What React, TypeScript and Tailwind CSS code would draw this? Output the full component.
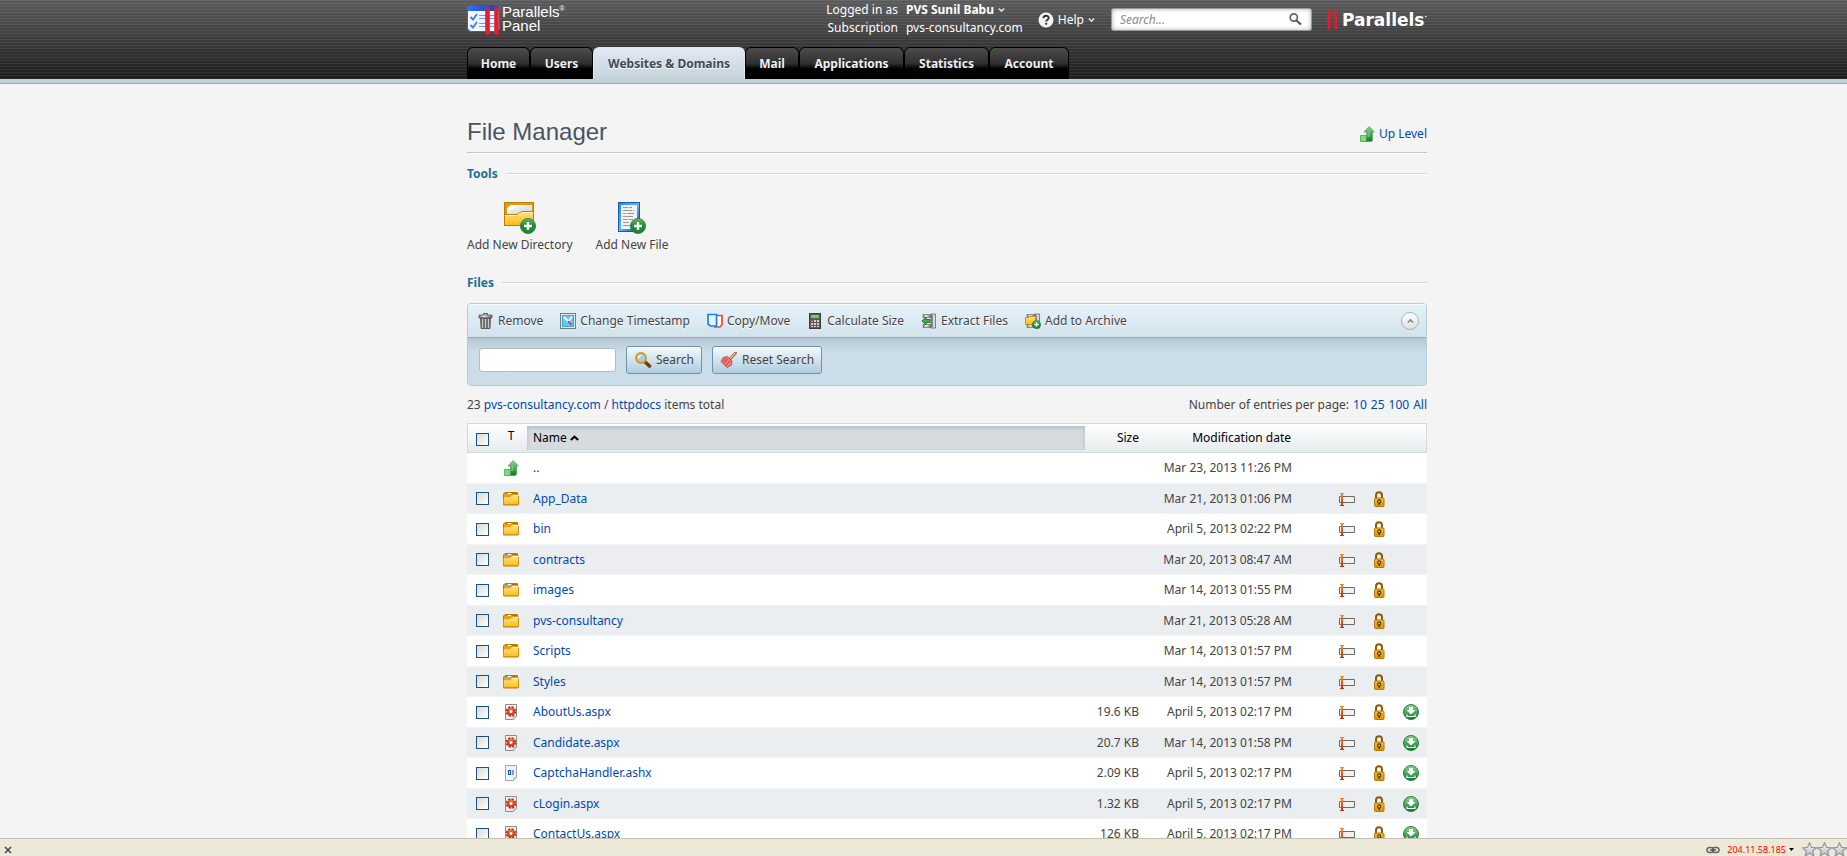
import React, { useState } from "react";

type FileKind = "up" | "folder" | "aspx" | "bin";

interface Entry {
  name: string;
  kind: FileKind;
  size?: string;
  date: string;
}

const entries: Entry[] = [
  { name: "..", kind: "up", date: "Mar 23, 2013 11:26 PM" },
  { name: "App_Data", kind: "folder", date: "Mar 21, 2013 01:06 PM" },
  { name: "bin", kind: "folder", date: "April 5, 2013 02:22 PM" },
  { name: "contracts", kind: "folder", date: "Mar 20, 2013 08:47 AM" },
  { name: "images", kind: "folder", date: "Mar 14, 2013 01:55 PM" },
  { name: "pvs-consultancy", kind: "folder", date: "Mar 21, 2013 05:28 AM" },
  { name: "Scripts", kind: "folder", date: "Mar 14, 2013 01:57 PM" },
  { name: "Styles", kind: "folder", date: "Mar 14, 2013 01:57 PM" },
  { name: "AboutUs.aspx", kind: "aspx", size: "19.6 KB", date: "April 5, 2013 02:17 PM" },
  { name: "Candidate.aspx", kind: "aspx", size: "20.7 KB", date: "Mar 14, 2013 01:58 PM" },
  { name: "CaptchaHandler.ashx", kind: "bin", size: "2.09 KB", date: "April 5, 2013 02:17 PM" },
  { name: "cLogin.aspx", kind: "aspx", size: "1.32 KB", date: "April 5, 2013 02:17 PM" },
  { name: "ContactUs.aspx", kind: "aspx", size: "126 KB", date: "April 5, 2013 02:17 PM" },
];

const tabs = [
  { label: "Home", width: "w-[63px]" },
  { label: "Users", width: "w-[63px]" },
  { label: "Websites & Domains", width: "w-[152px]", active: true },
  { label: "Mail", width: "w-[54px]" },
  { label: "Applications", width: "w-[105px]" },
  { label: "Statistics", width: "w-[85px]" },
  { label: "Account", width: "w-20" },
];

const linkClass = "text-[#0049b0] hover:underline";

/* ---------- icons ---------- */

function Gradients() {
  return (
    <svg width="0" height="0" className="absolute" aria-hidden="true">
      <defs>
        <linearGradient id="gFolder" x1="0" y1="0" x2="0" y2="1">
          <stop offset="0" stopColor="#ffe27a" />
          <stop offset="1" stopColor="#fdbb16" />
        </linearGradient>
        <linearGradient id="gGreen" x1="0" y1="0" x2="0" y2="1">
          <stop offset="0" stopColor="#8cd98a" />
          <stop offset="1" stopColor="#087a2c" />
        </linearGradient>
        <linearGradient id="gPlus" x1="0" y1="0" x2="0" y2="1">
          <stop offset="0" stopColor="#62b765" />
          <stop offset=".5" stopColor="#1e8a36" />
          <stop offset="1" stopColor="#1c8436" />
        </linearGradient>
        <linearGradient id="gBlue" x1="0" y1="0" x2="1" y2="1">
          <stop offset="0" stopColor="#2388e8" />
          <stop offset=".5" stopColor="#5ab4ff" />
          <stop offset="1" stopColor="#0a4fb4" />
        </linearGradient>
        <linearGradient id="gPaper" x1="0" y1="0" x2="1" y2="1">
          <stop offset="0" stopColor="#ffffff" />
          <stop offset="1" stopColor="#cfcfcf" />
        </linearGradient>
        <linearGradient id="gMetal" x1="0" y1="0" x2="1" y2="0">
          <stop offset="0" stopColor="#777" />
          <stop offset=".4" stopColor="#eeeeee" />
          <stop offset="1" stopColor="#666" />
        </linearGradient>
        <linearGradient id="gCursor" x1="0" y1="0" x2="0" y2="1">
          <stop offset="0" stopColor="#f09030" />
          <stop offset="1" stopColor="#cc2a08" />
        </linearGradient>
        <linearGradient id="gLock" x1="0" y1="0" x2="0" y2="1">
          <stop offset="0" stopColor="#f9bf2c" />
          <stop offset="1" stopColor="#dc8d06" />
        </linearGradient>
        <linearGradient id="gStar" x1="0" y1="0" x2="0" y2="1">
          <stop offset="0" stopColor="#ffffff" />
          <stop offset="1" stopColor="#b4b6bb" />
        </linearGradient>
        <linearGradient id="gPanel" x1="0" y1="0" x2="1" y2="0">
          <stop offset="0" stopColor="#2f6fee" />
          <stop offset="1" stopColor="#1b3fb0" />
        </linearGradient>
      </defs>
    </svg>
  );
}

function UpIcon() {
  return (
    <svg width="16" height="16" viewBox="0 0 16 16" aria-hidden="true">
      <path d="M1.500 9.500h6v6h-6z" fill="#7ddb78" stroke="#55bb5a" />
      <path
        d="M6.500 15.500h6l1-1V6h1.800L10.200.5 5 6h2.500v8z"
        fill="url(#gGreen)"
        stroke="#5f9f66"
        strokeWidth=".8"
      />
      <path d="M8.500 5h2v6h-2z" fill="#7ad276" opacity=".7" />
    </svg>
  );
}

function FolderIcon() {
  return (
    <svg width="16" height="16" viewBox="0 0 16 16" aria-hidden="true">
      <path d="M.5 14V3l1.500-1.500h12.500L15 6v8z" fill="#e9a01c" stroke="#c17a08" />
      <path d="M2.500 2.500h2" stroke="#2f7be0" />
      <path d="M4.500 2.500h4" stroke="#fff" />
      <path d="M8.500 2.500h5.500" stroke="#b06a06" />
      <path d="M1 14V7.500h6.500L9.500 5H16v9z" fill="url(#gFolder)" />
      <path d="M1 7h6.300l2-2.500H15.500" fill="none" stroke="#fff0b0" />
      <path d="M.5 7v6.500h15V5" fill="none" stroke="#d29410" />
    </svg>
  );
}

function AspxIcon() {
  return (
    <svg width="16" height="16" viewBox="0 0 16 16" aria-hidden="true">
      <path d="M2.500.5h11v12l-3 3h-8z" fill="#f4efee" stroke="#8b8b8b" />
      <path d="M13.500 12.500h-3v3z" fill="#d8d8d8" stroke="#aaa" strokeWidth=".6" />
      <circle cx="8" cy="7.500" r="4.300" fill="none" stroke="#b92a20" strokeWidth="2" strokeDasharray="2.100 1.280" />
      <circle cx="8" cy="7.500" r="2.800" fill="#fbe3cc" stroke="#dd3a16" strokeWidth="2.200" />
      <path d="M5.500 6a3 3 0 0 1 5 0" stroke="#f5a040" fill="none" />
      <path d="M7 6.500h2v2H7z" fill="#fff" />
    </svg>
  );
}

function BinIcon() {
  return (
    <svg width="16" height="16" viewBox="0 0 16 16" aria-hidden="true">
      <path d="M2.500.5h11v12l-3 3h-8z" fill="#f3f4f7" stroke="#a2a4a8" />
      <path d="M13.500 12.500h-3v3z" fill="#ddd" stroke="#aaa" strokeWidth=".6" />
      <path d="M5.500 5.500h2v4h-2zM10 5v5" fill="none" stroke="#1557cf" strokeWidth="1.100" />
    </svg>
  );
}

function RenameIcon() {
  return (
    <svg width="16" height="16" viewBox="0 0 16 16" aria-hidden="true">
      <path d="M.5 5.500h15v6H.5z" fill="#f1f1f1" stroke="#6a6a6a" />
      <path d="M1 2h4v1H4v11h1v1H1v-1h1V3H1z" fill="url(#gCursor)" />
    </svg>
  );
}

function LockIcon() {
  return (
    <svg width="16" height="16" viewBox="0 0 16 16" aria-hidden="true">
      <path d="M5 8V4.200a3 3 0 0 1 6 0V8" fill="none" stroke="#8f5a06" strokeWidth="2" />
      <rect x="3.500" y="7" width="9.500" height="8.500" rx="1" fill="url(#gLock)" stroke="#b97704" />
      <circle cx="8.200" cy="10.500" r="1.600" fill="#f5c84a" stroke="#42330d" strokeWidth="1.100" />
      <path d="M8.200 12v2" stroke="#42330d" strokeWidth="1.300" />
    </svg>
  );
}

function DownloadIcon() {
  return (
    <svg width="16" height="16" viewBox="0 0 16 16" aria-hidden="true">
      <circle cx="8" cy="8" r="7.500" fill="url(#gGreen)" stroke="#2f7a44" />
      <path d="M6 3h4v3h2.500L8 10.500 3.500 6H6z" fill="#fff" />
      <path d="M4 10.500v2h8v-2" fill="none" stroke="#fff" strokeWidth="1.200" />
    </svg>
  );
}

const kindIcons: Record<FileKind, () => React.JSX.Element> = {
  up: UpIcon,
  folder: FolderIcon,
  aspx: AspxIcon,
  bin: BinIcon,
};

function AddDirectoryIcon() {
  return (
    <svg width="32" height="32" viewBox="0 0 32 32" aria-hidden="true">
      <rect x=".5" y=".5" width="29" height="23" fill="#e69a0c" stroke="#bf7c05" />
      <path d="M3 12V6l4-3h21v9z" fill="url(#gPaper)" />
      <path d="M3 9c6-1 8-4 12-6H7L3 6z" fill="#fff" />
      <path d="M1 23V13h12l5-3h11v13z" fill="url(#gFolder)" />
      <path d="M1 12.500h12l5-3h11" fill="none" stroke="#b98016" />
      <path d="M1 13.500h12l5-3h11" fill="none" stroke="#fff3b8" />
      <PlusBadge cx={24} cy={24} r={8} />
    </svg>
  );
}

function PlusBadge({ cx, cy, r }: { cx: number; cy: number; r: number }) {
  return (
    <g transform={`translate(${cx} ${cy}) scale(${r / 8})`}>
      <circle r="7.600" fill="url(#gPlus)" stroke="#2b7a3c" strokeWidth=".8" />
      <path d="M-4 0h8M0-4v8" stroke="#fff" strokeWidth="2.400" />
    </g>
  );
}

function AddFileIcon() {
  return (
    <svg width="28" height="32" viewBox="0 0 28 32" aria-hidden="true">
      <rect x=".5" y=".5" width="21" height="29" fill="url(#gBlue)" stroke="#1a5cab" />
      <rect x="3" y="3" width="16" height="24" fill="#f1f1f1" />
      <path
        d="M5 5.500h5m1 0h3M5 8.500h9m1 0h1M5 11.500h3m1 0h7M5 14.500h10M5 17.500h5m1 0h4M5 20.500h6M5 23.500h7"
        stroke="#999"
      />
      <PlusBadge cx={20} cy={24} r={8} />
    </svg>
  );
}

function TrashIcon() {
  return (
    <svg width="16" height="16" viewBox="0 0 16 16" aria-hidden="true">
      <path d="M5.500 2V.5h4V2" fill="none" stroke="#555" />
      <path d="M1 2h13v3H1z" fill="url(#gMetal)" stroke="#4d4d4d" strokeWidth=".7" />
      <path d="M2.500 5h10l-.5 10.500H3z" fill="#6b6b6b" stroke="#444" strokeWidth=".7" />
      <path d="M4.500 6v9M7.500 6v9M10.500 6v9" stroke="#c9c9c9" strokeWidth="1.200" />
    </svg>
  );
}

function TimestampIcon() {
  return (
    <svg width="16" height="16" viewBox="0 0 16 16" aria-hidden="true">
      <rect x=".5" y=".5" width="15" height="15" fill="#e6eaec" stroke="#767c80" />
      <rect x="2.500" y="2.500" width="11" height="11" fill="#62c8fa" stroke="#3ba5e2" />
      <path d="M4 4l4.500 4.500" stroke="#fff" strokeWidth="2" />
      <path d="M12 3.500L8 9" stroke="#fff" strokeWidth="1.500" />
      <path d="M8 8l3.500 4" stroke="#d3283c" strokeWidth="1.400" />
    </svg>
  );
}

function CopyIcon() {
  return (
    <svg width="16" height="16" viewBox="0 0 16 16" aria-hidden="true">
      <path d="M8 2.500h7v9L13 14H8z" fill="#fff" stroke="#ee4a20" strokeWidth="1.700" />
      <path d="M1 1.500h8.500v11.500H3.500L1 11z" fill="#eaf4ff" stroke="#1683f0" strokeWidth="1.700" />
    </svg>
  );
}

function CalculatorIcon() {
  return (
    <svg width="16" height="16" viewBox="0 0 16 16" aria-hidden="true">
      <rect x="2.500" y=".5" width="11" height="15" fill="#5d5d5d" stroke="#3e3e3e" />
      <path d="M4 2h8v3H4z" fill="#5bd467" />
      <path d="M4 7h2v2H4z" fill="#ee5050" />
      <path d="M7 7h2v2H7zm3 0h2v2h-2zM4 10h2v2H4zm3 0h2v2H7zm3 0h2v2h-2zM4 13h2v1H4zm3 0h2v1H7zm3 0h2v1h-2z" fill="#d0d0d0" />
    </svg>
  );
}

function Vise() {
  return (
    <>
      <path d="M2 1.500h8v3H2zM2 11.500h8v3H2z" fill="url(#gMetal)" stroke="#777" strokeWidth=".8" />
      <path d="M10 1h4.500v14H10z" fill="#d9d9d9" stroke="#666" strokeWidth=".8" />
      <path d="M11 2v12" stroke="#555" strokeWidth="1.200" />
    </>
  );
}

function ExtractIcon() {
  return (
    <svg width="16" height="16" viewBox="0 0 16 16" aria-hidden="true">
      <Vise />
      <path d="M1 8l4-4v2.500h4v3H5V12z" fill="#3fae43" stroke="#14722a" strokeWidth=".9" />
    </svg>
  );
}

function ArchiveIcon() {
  return (
    <svg width="16" height="16" viewBox="0 0 16 16" aria-hidden="true">
      <Vise />
      <path d="M.5 4.500H4l1-1h5.500v8H.5z" fill="url(#gFolder)" stroke="#d29010" />
      <PlusBadge cx={11.500} cy={11.500} r={4.500} />
    </svg>
  );
}

function MagnifierIcon() {
  return (
    <svg width="18" height="16" viewBox="0 0 18 16" aria-hidden="true">
      <path d="M10.500 9.500l5 4.500" stroke="#74410d" strokeWidth="3.600" strokeLinecap="round" />
      <circle cx="7" cy="6" r="5" fill="#a9cbe0" stroke="#d79a12" strokeWidth="1.900" />
      <path d="M4.500 6.500c0-2 1-3 3-3" stroke="#f2f9fc" strokeWidth="1.400" fill="none" />
    </svg>
  );
}

function BroomIcon() {
  return (
    <svg width="18" height="16" viewBox="0 0 18 16" aria-hidden="true">
      <path d="M15.500 1L10 7" stroke="#a87040" strokeWidth="3" strokeLinecap="round" />
      <path d="M15 1.200L10.500 6" stroke="#eab988" strokeWidth="1.200" strokeLinecap="round" />
      <path d="M7.500 4.500l4.500 4.500-.5 4-4.500 2.500L1 9.500l2-4z" fill="#ee7c7c" stroke="#c84450" strokeWidth=".9" />
      <path d="M8 7l-4.500 4.500M10 9l-4.500 5M6.500 6l-4 3.500" stroke="#b92e40" strokeWidth=".8" />
    </svg>
  );
}

function ChevronIcon({ className }: { className: string }) {
  return (
    <svg width="7" height="6" viewBox="0 0 7 6" className={className} aria-hidden="true">
      <path d="M.8 1.500l2.700 2.500 2.700-2.500" fill="none" stroke="currentColor" strokeWidth="1.700" />
    </svg>
  );
}

function PanelLogo() {
  return (
    <svg width="33" height="31" viewBox="0 0 33 31" aria-hidden="true">
      <rect x=".5" y=".5" width="32" height="26" rx="4" fill="#f2f6fc" stroke="#2a5fd8" />
      <path d="M1 6V4a3.500 3.500 0 0 1 3.500-3.500h24A3.500 3.500 0 0 1 32 4v2z" fill="url(#gPanel)" />
      <path d="M3.500 12l2.500 2.500L10 9M3.500 20l2.500 2.500L10 17" fill="none" stroke="#3f82ea" strokeWidth="1.900" />
      <path d="M12 10.500h15M12 13.500h15M12 18.500h15M12 21.500h15" stroke="#6a9dec" />
      <path d="M20.500 4v24M29.500 4v24" stroke="#de2032" strokeWidth="4.600" strokeLinecap="round" />
    </svg>
  );
}

/* ---------- shared controls ---------- */

function TickBox({ label }: { label: string }) {
  return (
    <input
      type="checkbox"
      aria-label={label}
      className="block size-[13px] appearance-none border border-[#1d5180] bg-linear-to-br from-[#d9d9d4] to-white checked:bg-[#7fa5c4] checked:bg-none"
    />
  );
}

function SectionTitle({ children }: { children: React.ReactNode }) {
  return (
    <div className="flex h-4 items-center gap-2">
      <h2 className="text-xs leading-4 font-bold text-[#226e92]">{children}</h2>
      <div className="h-0.5 flex-1 border-t border-[#d3d7da] bg-white" />
    </div>
  );
}

const toolbarItems = [
  { label: "Remove", Icon: TrashIcon },
  { label: "Change Timestamp", Icon: TimestampIcon },
  { label: "Copy/Move", Icon: CopyIcon },
  { label: "Calculate Size", Icon: CalculatorIcon },
  { label: "Extract Files", Icon: ExtractIcon },
  { label: "Add to Archive", Icon: ArchiveIcon },
];

const actionButton =
  "flex h-7 items-center gap-1 rounded-[3px] border border-[#6d93aa] bg-linear-to-b from-[#f4f9fc] to-[#afcddf] px-[7px] text-xs text-[#444] shadow-[inset_0_1px_0_#fff]";

/* ---------- page regions ---------- */

function Header() {
  return (
    <header className="shrink-0 border-b border-[#9aabb8] bg-[#c3d1d7] pb-1">
      <div className="bg-[repeating-linear-gradient(to_bottom,rgba(255,255,255,0.07)_0_1px,transparent_1px_3px),linear-gradient(to_bottom,#5c5c5c,#1c1c1c)]">
        <div className="mx-auto max-w-[1007px] pl-[47px]">
          <div className="flex h-[47px] items-start">
            <a href="#home" className="flex items-start gap-0.5 pt-[5px] text-white">
              <PanelLogo />
              <span className="font-['Liberation_Sans',sans-serif] text-[15px] leading-[14px]">
                Parallels<span className="align-top text-[7px] leading-[7px]">®</span>
                <br />
                Panel
              </span>
            </a>
            <dl className="ml-auto grid grid-cols-[auto_auto] gap-x-2 pt-px text-xs leading-[18px] text-white">
              <dt className="text-right">Logged in as</dt>
              <dd>
                <button type="button" className="flex items-center gap-1 font-bold">
                  PVS Sunil Babu <ChevronIcon className="text-[#ddd]" />
                </button>
              </dd>
              <dt className="text-right">Subscription</dt>
              <dd>pvs-consultancy.com</dd>
            </dl>
            <button type="button" className="ml-[15px] flex h-10 items-center gap-1 text-xs text-white">
              <svg width="16" height="16" viewBox="0 0 16 16" aria-hidden="true">
                <circle cx="8" cy="8" r="7.500" fill="#f5f5f5" />
                <path
                  d="M5.400 6.200c0-3.400 5.300-3.200 5.300-.3 0 1.800-2.500 1.800-2.500 3.600M8.200 10.700v2"
                  fill="none"
                  stroke="#333"
                  strokeWidth="1.900"
                />
              </svg>
              <span>Help</span>
              <ChevronIcon className="text-[#ddd]" />
            </button>
            <form
              role="search"
              className="mt-2 ml-4 flex h-[23px] w-[201px] items-center rounded-[3px] border border-[#999] bg-white pr-[9px] pl-2 shadow-[inset_0_0_4px_#aaa]"
              onSubmit={(e) => e.preventDefault()}
            >
              <input
                type="text"
                aria-label="Search"
                placeholder="Search..."
                className="min-w-0 flex-1 bg-transparent text-xs text-[#333] italic outline-none placeholder:text-[#8a8a8a]"
              />
              <button type="submit" aria-label="Search">
                <svg width="13" height="13" viewBox="0 0 13 13" aria-hidden="true">
                  <circle cx="4.800" cy="4.500" r="3.600" fill="none" stroke="#666" strokeWidth="1.700" />
                  <path d="M7.500 7.500l4.500 4" stroke="#555" strokeWidth="2.200" />
                </svg>
              </button>
            </form>
            <a href="#parallels" className="flex items-center gap-1 pt-[9px] pl-[15px] text-white">
              <svg width="11" height="21" viewBox="0 0 11 21" aria-hidden="true">
                <path d="M2 2v17M9 2v17" stroke="#d81e30" strokeWidth="3.200" strokeLinecap="round" />
              </svg>
              <span className="flex items-start font-['DejaVu_Sans',sans-serif] text-[17px] leading-5 font-bold">
                Parallels
                <span className="text-[4px] leading-[14px]">•</span>
              </span>
            </a>
          </div>
          <nav className="flex h-8" aria-label="Main">
            {tabs.map((tab) => (
              <a
                key={tab.label}
                href="#tab"
                aria-current={tab.active ? "page" : undefined}
                className={`flex items-center justify-center rounded-t-[6px] border-x border-t text-xs font-bold ${tab.width} ${
                  tab.active
                    ? "border-[#dfe7ef] bg-linear-to-b from-[#e2e9f3] to-[#c5d4da] text-[#3f4a58] [text-shadow:0_1px_0_#fff]"
                    : "border-black bg-linear-to-b from-[#4c4c4c] via-[#303030] via-50% to-black to-75% text-[#f0f0f0] [text-shadow:0_1px_0_#000]"
                }`}
              >
                {tab.label}
              </a>
            ))}
          </nav>
        </div>
      </div>
    </header>
  );
}

function Toolbar() {
  const [open, setOpen] = useState(true);
  return (
    <div className="overflow-hidden rounded-[4px] border border-[#b3cddd] bg-[#cbdde8]">
      <div className="flex h-[34px] items-center gap-[17px] border-b border-[#92afc0] bg-linear-to-b from-[#e5f2fa] to-[#d2e3ec] pr-[7px] pl-[10px] shadow-[inset_0_1px_0_#f4fafd]">
        {toolbarItems.map(({ label, Icon }) => (
          <button
            key={label}
            type="button"
            className="flex items-center gap-1 text-xs whitespace-nowrap text-[#444] [text-shadow:0_1px_0_#fff]"
          >
            <Icon />
            {label}
          </button>
        ))}
        <button
          type="button"
          aria-label="Toggle search"
          aria-expanded={open}
          onClick={() => setOpen(!open)}
          className="ml-auto flex size-[18px] items-center justify-center rounded-full border border-[#a9b3b9] bg-linear-to-b from-white to-[#dde2e5]"
        >
          <ChevronIcon className="rotate-180 text-[#888]" />
        </button>
      </div>
      {open && (
        <form
          className="flex h-[47px] items-start gap-[10px] bg-linear-to-b from-[#b4c8d4] to-[#cbdde8] to-30% pt-2 pl-[11px]"
          onSubmit={(e) => e.preventDefault()}
        >
          <input
            type="text"
            aria-label="Search files"
            className="mt-0.5 h-6 w-[137px] rounded-[3px] border border-[#b4bcc2] bg-white px-1 text-xs outline-none"
          />
          <button type="submit" className={actionButton}>
            <MagnifierIcon />
            Search
          </button>
          <button type="reset" className={actionButton}>
            <BroomIcon />
            Reset Search
          </button>
        </form>
      )}
    </div>
  );
}

function FileTable() {
  return (
    <table className="w-full table-fixed border-separate border-spacing-0 text-xs">
      <colgroup>
        <col className="w-[30px]" />
        <col className="w-7" />
        <col />
        <col className="w-[59px]" />
        <col className="w-[186px]" />
        <col className="w-8" />
        <col className="w-8" />
        <col className="w-8" />
      </colgroup>
      <thead>
        <tr className="h-[30px] bg-linear-to-b from-white to-[#e6eaec] text-black [&>th]:border-y [&>th]:border-[#cfdbe1] [&>th]:font-normal">
          <th className="border-l pt-0.5 pl-2 text-left">
            <TickBox label="Select all" />
          </th>
          <th className="pb-1">T</th>
          <th className="py-0.5 pr-px pl-0.5 text-left" aria-sort="ascending">
            <button
              type="button"
              className="flex h-6 w-full items-center gap-[3px] bg-[#d6dbdf] pl-1.5 shadow-[inset_0_2px_4px_#b5bbc0]"
            >
              Name
              <svg width="9" height="6" viewBox="0 0 9 6" aria-hidden="true">
                <path d="M.8 5l3.700-3.300L8.200 5" fill="none" stroke="#000" strokeWidth="2" />
              </svg>
            </button>
          </th>
          <th className="pr-[6px] text-right">Size</th>
          <th className="pr-10 text-right">Modification date</th>
          <th />
          <th />
          <th className="border-r" />
        </tr>
      </thead>
      <tbody className="text-[#444]">
        {entries.map((entry) => {
          const Icon = kindIcons[entry.kind];
          const isParent = entry.kind === "up";
          const isFile = entry.kind === "aspx" || entry.kind === "bin";
          return (
            <tr
              key={entry.name}
              className="h-[31px] bg-white even:h-[30px] even:bg-[#eaeef1] [&>td]:border-b [&>td]:border-[#f4f4f4]"
            >
              <td className="pl-[9px]">{!isParent && <TickBox label={`Select ${entry.name}`} />}</td>
              <td className="pl-1.5">
                <Icon />
              </td>
              <td className="pl-2">
                <a href="#entry" className={linkClass}>
                  {entry.name}
                </a>
              </td>
              <td className="pr-[6px] text-right whitespace-nowrap">{entry.size}</td>
              <td className="pr-[39px] text-right whitespace-nowrap">{entry.date}</td>
              <td className="pl-2">
                {!isParent && (
                  <button type="button" aria-label={`Rename ${entry.name}`} className="block">
                    <RenameIcon />
                  </button>
                )}
              </td>
              <td className="pl-2">
                {!isParent && (
                  <button type="button" aria-label={`Permissions of ${entry.name}`} className="block">
                    <LockIcon />
                  </button>
                )}
              </td>
              <td className="pl-2">
                {isFile && (
                  <button type="button" aria-label={`Download ${entry.name}`} className="block">
                    <DownloadIcon />
                  </button>
                )}
              </td>
            </tr>
          );
        })}
      </tbody>
    </table>
  );
}

function StatusBar() {
  return (
    <footer className="flex h-[18px] shrink-0 items-center overflow-hidden border-t border-[#c5c1b2] bg-[#ece9d8] pt-1 pl-1">
      <button type="button" aria-label="Close bar">
        <svg width="8" height="8" viewBox="0 0 8 8" aria-hidden="true">
          <path d="M1 1l6 6M7 1L1 7" stroke="#444" strokeWidth="1.500" />
        </svg>
      </button>
      <svg width="14" height="8" viewBox="0 0 14 8" className="ml-auto" aria-hidden="true">
        <rect x="1" y="1.500" width="6.500" height="5" rx="2.500" fill="none" stroke="#666" strokeWidth="1.500" />
        <rect x="6.500" y="1.500" width="6.500" height="5" rx="2.500" fill="none" stroke="#666" strokeWidth="1.500" />
        <path d="M4 4h6" stroke="#444" strokeWidth="1.300" />
      </svg>
      <button type="button" className="ml-[7px] flex items-center gap-[3px] text-[9px] leading-3 text-[#f00]">
        204.11.58.185
        <svg width="5" height="3" viewBox="0 0 5 3" aria-hidden="true">
          <path d="M0 0h5L2.500 3z" fill="#000" />
        </svg>
      </button>
      <div className="ml-2 flex" aria-hidden="true">
        {[0, 1, 2].map((n) => (
          <svg key={n} width="15" height="15" viewBox="0 0 15 15">
            <path
              d="M7.500.8l2 4.600 5 .4-3.800 3.200 1.200 5-4.400-2.700L3.100 14l1.200-5L.5 5.800l5-.4z"
              fill="url(#gStar)"
              stroke="#96989c"
              strokeWidth="1.200"
            />
          </svg>
        ))}
      </div>
    </footer>
  );
}

export default function App() {
  return (
    <div className="flex h-screen flex-col bg-[#f4f4f4] font-['Noto_Sans',sans-serif] text-xs leading-4 text-[#444]">
      <Gradients />
      <Header />
      <main className="min-h-0 flex-1 overflow-y-auto [scrollbar-width:none]">
        <div className="mx-auto max-w-[1007px] pt-8 pl-[47px]">
          <div className="flex h-[37px] items-start justify-between border-b border-[#c4c6c8] shadow-[0_1px_0_#fff]">
            <h1 className="font-['Liberation_Sans',sans-serif] text-2xl text-[#4a5462]">File Manager</h1>
            <a href="#up" className={`flex items-center gap-1 pt-[10px] ${linkClass}`}>
              <UpIcon />
              Up Level
            </a>
          </div>

          <div className="mt-[13px]">
            <SectionTitle>Tools</SectionTitle>
          </div>
          <div className="mt-5 flex gap-[23px]">
            <button type="button" className="flex flex-col items-center gap-[3px]">
              <AddDirectoryIcon />
              Add New Directory
            </button>
            <button type="button" className="flex flex-col items-center gap-[3px]">
              <AddFileIcon />
              Add New File
            </button>
          </div>

          <div className="mt-[22px] mb-3">
            <SectionTitle>Files</SectionTitle>
          </div>
          <Toolbar />

          <div className="mt-[11px] mb-[10px] flex items-center justify-between">
            <p>
              23{" "}
              <a href="#domain" className={linkClass}>
                pvs-consultancy.com
              </a>{" "}
              /{" "}
              <a href="#httpdocs" className={linkClass}>
                httpdocs
              </a>{" "}
              items total
            </p>
            <p className="flex gap-1">
              Number of entries per page:
              {["10", "25", "100", "All"].map((count) => (
                <a key={count} href="#page-size" className={linkClass}>
                  {count}
                </a>
              ))}
            </p>
          </div>

          <FileTable />
        </div>
      </main>
      <StatusBar />
    </div>
  );
}
